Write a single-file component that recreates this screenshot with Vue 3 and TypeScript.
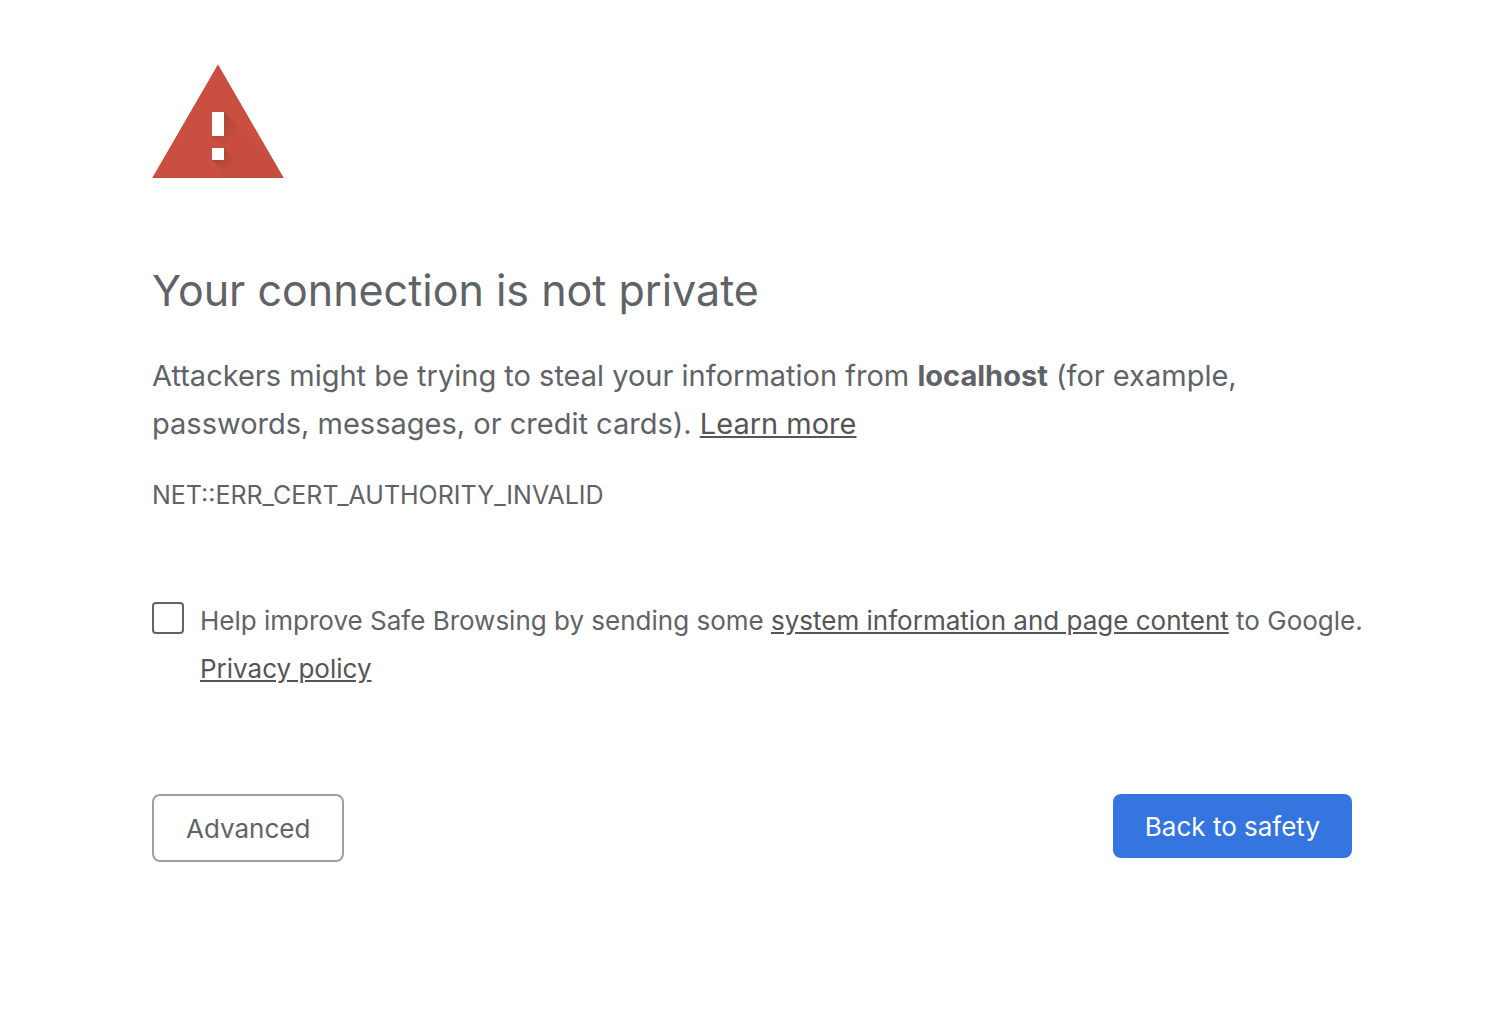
<script setup lang="ts">
import { ref } from 'vue'

const host: string = 'localhost'
const errorCode: string = 'NET::ERR_CERT_AUTHORITY_INVALID'
const optIn = ref<boolean>(false)
</script>

<template>
  <main class="page">
    <svg class="warning" viewBox="0 0 132 114" role="img" aria-label="Warning">
      <defs>
        <clipPath id="tri"><path d="M66 0 132 114H0Z" /></clipPath>
        <linearGradient id="bar-shade" gradientUnits="userSpaceOnUse" x1="66" y1="54" x2="84" y2="72">
          <stop offset="0" stop-color="#3e2723" stop-opacity="0.24" />
          <stop offset="1" stop-color="#3e2723" stop-opacity="0.03" />
        </linearGradient>
        <linearGradient id="dot-shade" gradientUnits="userSpaceOnUse" x1="66" y1="90" x2="80" y2="104">
          <stop offset="0" stop-color="#3e2723" stop-opacity="0.24" />
          <stop offset="1" stop-color="#3e2723" stop-opacity="0.03" />
        </linearGradient>
      </defs>
      <g clip-path="url(#tri)">
        <path d="M66 0 132 114H0Z" fill="#cb4f40" />
        <path d="M72 48 138 114H102L72 84 60 72Z" fill="url(#bar-shade)" />
        <path d="M72 84 102 114H78L60 96Z" fill="url(#dot-shade)" />
        <path d="M0 113H132V114H0Z" fill="#3e2723" fill-opacity="0.08" />
      </g>
      <path d="M60 48H72V72H60ZM60 84H72V96H60Z" fill="#fff" />
    </svg>
    <h1>Your connection is not private</h1>
    <p class="message">
      Attackers might be trying to steal your information from <strong>{{ host }}</strong> (for example,
      passwords, messages, or credit cards). <a href="#">Learn more</a>
    </p>
    <div class="code">{{ errorCode }}</div>
    <div class="opt-in">
      <input id="opt-in" v-model="optIn" type="checkbox" />
      <label for="opt-in">
        Help improve Safe Browsing by sending some <a href="#">system information and page content</a> to Google.
        <a href="#">Privacy policy</a>
      </label>
    </div>
    <div class="actions">
      <button class="secondary" type="button">Advanced</button>
      <button class="primary" type="button">Back to safety</button>
    </div>
  </main>
</template>

<style>
body {
  background: #fff;
}
</style>

<style scoped>
.page {
  box-sizing: border-box;
  max-width: 1200px;
  margin: 0 154px 0 152px;
  padding-top: 64px;
  color: #5f6368;
  font-family: Inter, "Liberation Sans", sans-serif;
}
.warning {
  display: block;
  width: 132px;
  height: 114px;
}
h1 {
  margin: 82px 0 32px;
  font-size: 43px;
  font-weight: 400;
  line-height: 60px;
}
.message {
  margin: 0;
  font-size: 29px;
  line-height: 48px;
}
.code {
  margin-top: 32px;
  font-size: 25px;
  line-height: 30px;
}
a {
  color: #555;
  text-decoration: underline;
}
.opt-in {
  display: flex;
  gap: 16px;
  margin: 87px -16px 0 0;
  font-size: 26px;
  line-height: 48px;
}
.opt-in input {
  flex: none;
  appearance: none;
  box-sizing: border-box;
  width: 32px;
  height: 32px;
  margin: 5px 0 0;
  border: 2px solid #5f6368;
  border-radius: 4px;
  background: #fff;
}
.opt-in input:checked {
  background: #3575e0;
}
.actions {
  display: flex;
  justify-content: space-between;
  align-items: flex-start;
  margin-top: 101px;
}
button {
  box-sizing: border-box;
  padding: 17px 32px 15px;
  border: 0;
  border-radius: 8px;
  font-family: inherit;
  font-size: 26px;
  line-height: 32px;
  cursor: pointer;
}
.secondary {
  border: 2px solid #9aa0a6;
  background: #fff;
  color: #5f6368;
}
.primary {
  background: #3575e0;
  color: #fff;
}
</style>
